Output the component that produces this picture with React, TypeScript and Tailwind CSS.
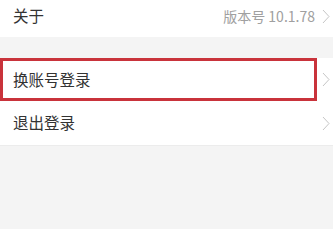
import React from "react";

const font = { fontFamily: '"Noto Sans CJK SC", "Noto Sans", sans-serif' };

const Chevron = () => (
  <svg width="8" height="15" viewBox="0 0 8 15" className="shrink-0">
    <path d="M1 1 L7 7.5 L1 14" fill="none" stroke="#c6c6c6" strokeWidth="1" />
  </svg>
);

export default function App() {
  return (
    <div className="w-[333px] h-[229px] bg-[#f4f4f4] overflow-hidden" style={font}>
      {/* about row */}
      <div className="h-[37px] bg-white flex items-center pl-[13px] pr-[3px] pb-[5px]">
        <span className="text-[15.5px] text-[#333] leading-none">关于</span>
        <span className="ml-auto text-[14px] text-[#a0a0a0] leading-none mr-[7px]">版本号 10.1.78</span>
        <Chevron />
      </div>

      <div className="h-[21px]" />

      <div className="bg-white">
        {/* highlighted row */}
        <div className="h-[43px] flex items-center pr-[3px]">
          <div className="w-[317px] h-full border-[3px] border-[#c9333b] flex items-center pl-[10px]">
            <span className="text-[15.5px] text-[#333] leading-none">换账号登录</span>
          </div>
          <div className="ml-auto">
            <Chevron />
          </div>
        </div>
        {/* logout */}
        <div className="h-[45px] flex items-center pl-[13px] pr-[3px] border-b border-[#ececec]">
          <span className="text-[15.5px] text-[#333] leading-none">退出登录</span>
          <div className="ml-auto">
            <Chevron />
          </div>
        </div>
      </div>
    </div>
  );
}
